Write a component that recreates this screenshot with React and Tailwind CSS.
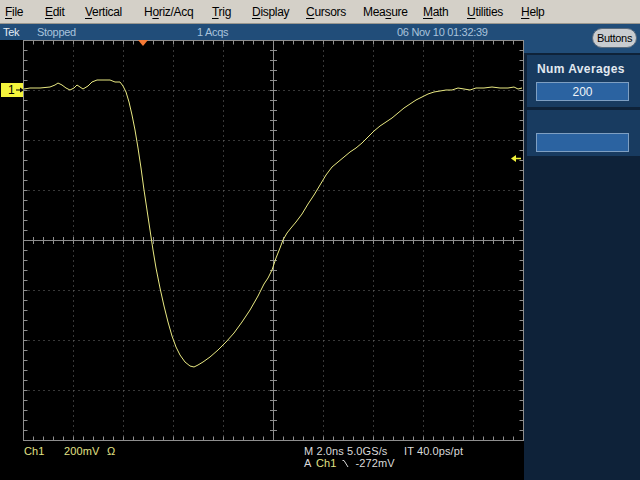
import React from 'react';

const menuItems = [
  { pre: '', key: 'F', post: 'ile', w: 'w-[40px]' },
  { pre: '', key: 'E', post: 'dit', w: 'w-[40px]' },
  { pre: '', key: 'V', post: 'ertical', w: 'w-[59px]' },
  { pre: 'H', key: 'o', post: 'riz/Acq', w: 'w-[68px]' },
  { pre: '', key: 'T', post: 'rig', w: 'w-[40px]' },
  { pre: '', key: 'D', post: 'isplay', w: 'w-[54px]' },
  { pre: '', key: 'C', post: 'ursors', w: 'w-[57px]' },
  { pre: 'Mea', key: 's', post: 'ure', w: 'w-[60px]' },
  { pre: '', key: 'M', post: 'ath', w: 'w-[44px]' },
  { pre: '', key: 'U', post: 'tilities', w: 'w-[54px]' },
  { pre: '', key: 'H', post: 'elp', w: 'w-[40px]' },
];

// waveform samples in page coordinates
const wave = [
  [24, 89], [30, 88], [40, 88], [50, 87], [55, 85], [58, 83], [62, 85], [66, 88], [70, 90], [74, 88],
  [77, 85], [80, 87], [83, 89], [88, 86], [92, 82], [97, 80], [103, 80], [110, 80], [115, 82], [120, 82],
  [123, 86], [126, 92], [129, 102], [132, 115], [135, 130], [138, 148], [141, 168], [144, 190], [147, 210],
  [150, 230], [153, 250], [156, 268], [160, 288], [164, 306], [168, 322], [172, 336], [176, 347], [180, 355],
  [185, 362], [190, 366], [194, 367], [198, 365], [203, 362], [210, 357], [218, 350], [226, 342], [234, 333],
  [242, 322], [250, 310], [258, 296], [264, 284], [268, 278], [272, 270], [276, 258], [280, 248], [283, 240],
  [287, 233], [291, 228], [296, 222], [302, 214], [308, 204], [314, 195], [320, 185], [326, 175], [332, 167],
  [338, 162], [344, 157], [350, 152], [356, 148], [362, 143], [368, 137], [374, 131], [380, 126], [386, 122],
  [392, 118], [398, 113], [404, 108], [410, 104], [416, 100], [422, 97], [428, 94], [434, 92], [440, 91],
  [446, 90], [452, 90], [458, 88], [464, 89], [470, 90], [476, 88], [484, 88], [492, 87], [500, 88],
  [508, 88], [514, 87], [518, 89], [522, 88],
];

function Graticule() {
  const X0 = 23.5;
  const Y0 = 0.5;
  const grid = '#8e8e8e';
  const dots = '#707070';
  const lines = [];

  // dotted division lines
  for (let i = 1; i < 10; i++) {
    if (i === 5) continue;
    const x = X0 + 50 * i;
    lines.push(<line key={`dv${i}`} x1={x} y1={Y0 + 5} x2={x} y2={Y0 + 400} stroke={dots} strokeDasharray="1 4" />);
  }
  for (let j = 1; j < 8; j++) {
    if (j === 4) continue;
    const y = Y0 + 50 * j;
    lines.push(<line key={`dh${j}`} x1={X0 + 5} y1={y} x2={X0 + 500} y2={y} stroke={dots} strokeDasharray="1 4" />);
  }

  // edge + centre ticks
  for (let k = 1; k < 50; k++) {
    const x = X0 + 10 * k;
    lines.push(<line key={`tt${k}`} x1={x} y1={0} x2={x} y2={4.5} stroke={grid} />);
    lines.push(<line key={`tb${k}`} x1={x} y1={396.5} x2={x} y2={401} stroke={grid} />);
    lines.push(<line key={`tc${k}`} x1={x} y1={197} x2={x} y2={204} stroke={grid} />);
  }
  for (let k = 1; k < 40; k++) {
    const y = Y0 + 10 * k;
    lines.push(<line key={`tl${k}`} x1={23} y1={y} x2={27.5} y2={y} stroke={grid} />);
    lines.push(<line key={`tr${k}`} x1={519.5} y1={y} x2={524} y2={y} stroke={grid} />);
    lines.push(<line key={`tm${k}`} x1={270} y1={y} x2={277} y2={y} stroke={grid} />);
  }

  const pts = wave.map(([x, y]) => `${x},${y - 40}`).join(' ');

  return (
    <svg width="524" height="401" className="block">
      {lines}
      <rect x={X0} y={Y0} width="500" height="400" fill="none" stroke={grid} />
      <line x1={X0 + 250} y1={0} x2={X0 + 250} y2={401} stroke={grid} />
      <line x1={X0} y1={200.5} x2={X0 + 500} y2={200.5} stroke={grid} />
      <polyline points={pts} fill="none" stroke="#e9e982" strokeWidth="1" strokeLinejoin="round" />
      {/* trigger position */}
      <polygon points="138,0 148,0 143,6" fill="#f57a36" />
      {/* trigger level */}
      <polygon points="511,118.5 516,115 516,122" fill="#f2f23a" />
      <line x1="515" y1="118.5" x2="521" y2="118.5" stroke="#f2f23a" strokeWidth="1.5" />
    </svg>
  );
}

function FallingEdge() {
  return (
    <svg width="7" height="9" className="inline-block mx-[6px]">
      <path d="M0.5 1.5 H2 L6 8" fill="none" stroke="#d8d8d8" strokeWidth="1" />
    </svg>
  );
}

export default function App() {
  return (
    <div className="w-[640px] h-[480px] flex flex-col bg-black overflow-hidden font-['Liberation_Sans',Arial,sans-serif]">
      {/* Menu bar */}
      <div className="h-[24px] bg-[#d4d0c8] border-b border-[#9a978f] flex items-center pl-[5px] text-[12px] text-black tracking-[-0.3px]">
        {menuItems.map((m) => (
          <div key={m.key + m.post} className={m.w}>
            {m.pre}
            <span className="underline underline-offset-2">{m.key}</span>
            {m.post}
          </div>
        ))}
      </div>

      <div className="flex flex-1">
        {/* Scope display */}
        <div className="w-[524px] flex flex-col">
          <div className="h-[16px] bg-[#214d79] flex items-center text-[11px] tracking-[-0.3px] text-[#a9c3dc] leading-none">
            <div className="w-[37px] pl-[3px] text-[#e4ecf4]">Tek</div>
            <div className="w-[160px]">Stopped</div>
            <div className="w-[200px]">1 Acqs</div>
            <div>06 Nov 10 01:32:39</div>
          </div>

          <div className="relative flex-1 bg-black">
            <Graticule />

            {/* channel 1 marker */}
            <div className="absolute left-[1px] top-[43px] w-[22px] h-[14px] bg-[#f4f43c] flex items-center pl-[7px] text-[12px] leading-none text-black">
              1
              <svg width="8" height="6" className="ml-[1px]">
                <line x1="0" y1="3" x2="5" y2="3" stroke="#000" />
                <polygon points="4,0.5 8,3 4,5.5" fill="#000" />
              </svg>
            </div>

            {/* readouts */}
            <div className="flex pt-[4px] text-[11px] leading-[12px] tracking-[0.1px]">
              <div className="w-[304px] pl-[24px] flex text-[#e2e286]">
                <div className="w-[40px]">Ch1</div>
                <div className="w-[43px]">200mV</div>
                <div>Ω</div>
              </div>
              <div className="flex flex-col text-[#dadada]">
                <div className="flex">
                  <div className="w-[100px]">M 2.0ns 5.0GS/s</div>
                  <div>IT 40.0ps/pt</div>
                </div>
                <div className="flex items-center">
                  <span className="w-[12px]">A</span>
                  <span className="text-[#e2e286]">Ch1</span>
                  <FallingEdge />
                  <span>-272mV</span>
                </div>
              </div>
            </div>
          </div>
        </div>

        {/* Side panel */}
        <div className="w-[116px] flex flex-col bg-[#0e2239]">
          <div className="h-[29px] bg-[#214d79] flex justify-end items-start pt-[4px] pr-[3px]">
            <div className="w-[45px] h-[20px] rounded-full bg-[#c9ccd0] border border-[#5b6b7c] flex items-center justify-center text-[11px] text-black tracking-[-0.3px]">
              Buttons
            </div>
          </div>

          <div className="mt-[2px] ml-[3px] h-[52px] bg-[#183b60] flex flex-col">
            <div className="pt-[7px] pl-[10px] text-[12px] leading-[14px] font-bold tracking-[0.4px] text-[#e2e9f0]">
              Num Averages
            </div>
            <div className="mt-[6px] ml-[9px] w-[93px] h-[19px] bg-[#2b63a1] border border-[#7e9fc2] flex items-center justify-center text-[12px] text-[#f0f4f8]">
              200
            </div>
          </div>

          <div className="mt-[3px] ml-[3px] h-[46px] bg-[#183b60] flex flex-col">
            <div className="mt-[23px] ml-[9px] w-[93px] h-[19px] bg-[#2b63a1] border border-[#7e9fc2]" />
          </div>
        </div>
      </div>
    </div>
  );
}
